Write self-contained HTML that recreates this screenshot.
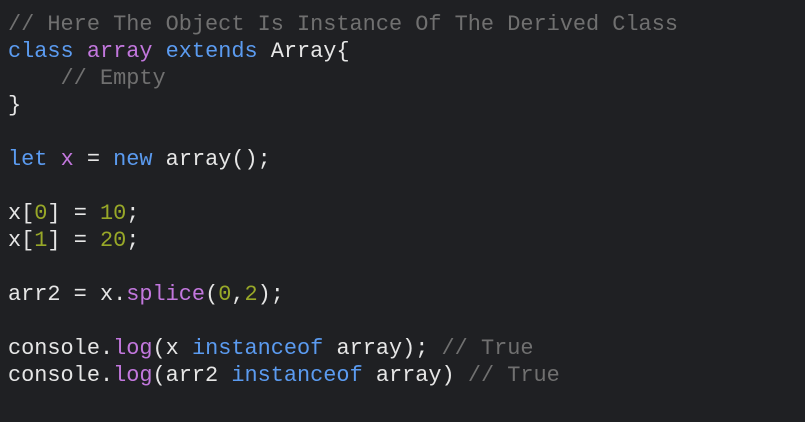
<!DOCTYPE html>
<html><head><style>
html,body{margin:0;padding:0;background:#1f2023;width:805px;height:422px;overflow:hidden}
pre{margin:0;position:absolute;left:8px;top:11px;font-family:"Liberation Mono",monospace;font-size:21.9px;line-height:27px;color:#e6e6e6}
.c{color:#707070}.k{color:#5b9bf0}.p{color:#c277dd}.n{color:#98a828}
</style></head><body><pre><span class="c">// Here The Object Is Instance Of The Derived Class</span>
<span class="k">class</span> <span class="p">array</span> <span class="k">extends</span> Array{
    <span class="c">// Empty</span>
}

<span class="k">let</span> <span class="p">x</span> = <span class="k">new</span> array();

x[<span class="n">0</span>] = <span class="n">10</span>;
x[<span class="n">1</span>] = <span class="n">20</span>;

arr2 = x.<span class="p">splice</span>(<span class="n">0</span>,<span class="n">2</span>);

console.<span class="p">log</span>(x <span class="k">instanceof</span> array); <span class="c">// True</span>
console.<span class="p">log</span>(arr2 <span class="k">instanceof</span> array) <span class="c">// True</span>
</pre></body></html>
